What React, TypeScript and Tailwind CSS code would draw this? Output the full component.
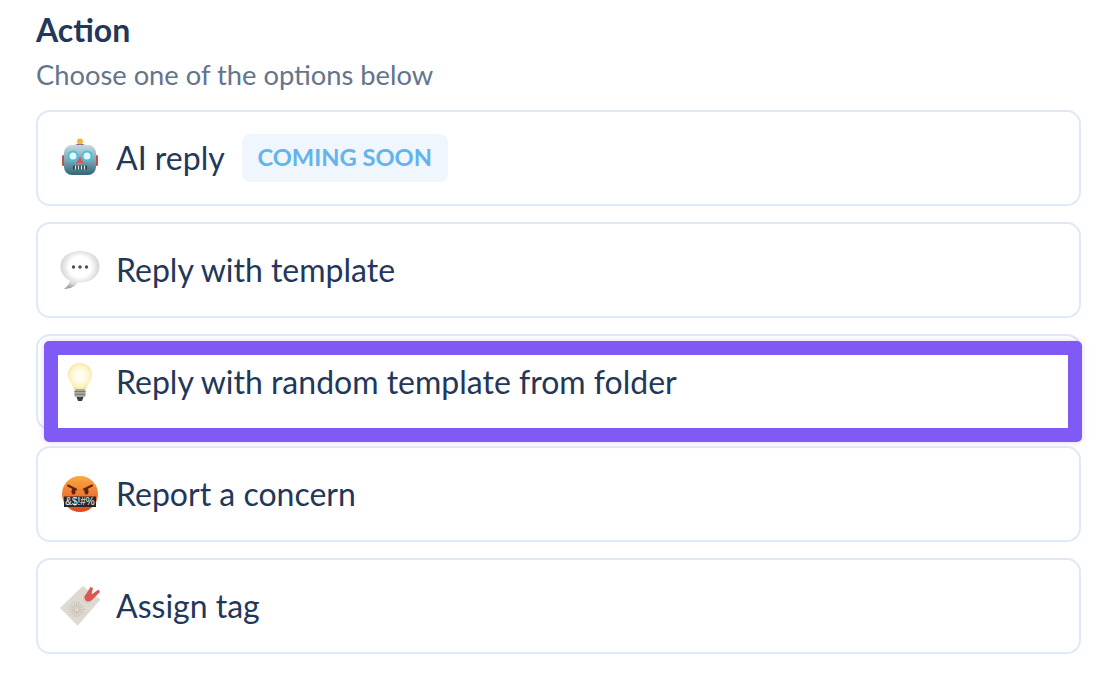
const RobotIcon = () => (
  <svg width="40" height="40" viewBox="0 0 40 40" className="shrink-0">
    <defs>
      <linearGradient id="robotHead" x1="0" y1="0" x2="0" y2="1">
        <stop offset="0" stopColor="#c4d8dd" />
        <stop offset="0.5" stopColor="#7fa9b5" />
        <stop offset="1" stopColor="#2f6577" />
      </linearGradient>
    </defs>
    <rect x="2" y="17" width="4" height="11" rx="1.500" fill="#b9524a" />
    <rect x="34" y="17" width="4" height="11" rx="1.500" fill="#b9524a" />
    <path d="M15 7q5-3 10 0v2H15z" fill="#6d5a9c" />
    <circle cx="20" cy="3.500" r="3" fill="#f3b33d" />
    <rect x="4" y="7" width="32" height="30" rx="8" fill="url(#robotHead)" />
    <circle cx="13" cy="18" r="4.500" fill="#e6f7fb" stroke="#45c1e0" strokeWidth="2" />
    <circle cx="27" cy="18" r="4.500" fill="#e6f7fb" stroke="#45c1e0" strokeWidth="2" />
    <path d="M20 18l3.500 7h-7z" fill="#d9594c" />
    <rect x="13" y="27.500" width="14" height="4" rx="1" fill="#1f3a46" />
    <path d="M15.500 27.500v4M18.500 27.500v4M21.500 27.500v4M24.500 27.500v4" stroke="#dfe8ea" strokeWidth="1.400" />
  </svg>
)

const BubbleIcon = () => (
  <svg width="40" height="40" viewBox="0 0 40 40" className="shrink-0">
    <defs>
      <radialGradient id="bubbleFill" cx="0.5" cy="0.42" r="0.6">
        <stop offset="0.45" stopColor="#ffffff" />
        <stop offset="0.8" stopColor="#d8d8d8" />
        <stop offset="1" stopColor="#a4a4a4" />
      </radialGradient>
    </defs>
    <path
      d="M20 1C8.500 1 .5 7.500.5 16.500c0 6.500 4 11.500 9.500 14-.5 3-2.500 6-6 8.500 5.500 0 10.500-2 14-6.500l2 .1c11.500 0 19.500-7 19.500-16.100S31.500 1 20 1z"
      fill="url(#bubbleFill)"
    />
    <circle cx="13.500" cy="17" r="1.700" fill="#4b4f57" />
    <circle cx="20" cy="17" r="1.700" fill="#4b4f57" />
    <circle cx="26.500" cy="17" r="1.700" fill="#4b4f57" />
  </svg>
)

const BulbIcon = () => (
  <svg width="40" height="40" viewBox="0 0 40 40" className="shrink-0">
    <defs>
      <radialGradient id="bulbGlow" cx="0.5" cy="0.5" r="0.55">
        <stop offset="0.3" stopColor="#fffdf2" />
        <stop offset="0.8" stopColor="#fdf0bd" />
        <stop offset="1" stopColor="#f3d98a" />
      </radialGradient>
    </defs>
    <path
      d="M20 1C13 1 8 6.200 8 12.800c0 6 4.500 9 5.800 14.200h12.400C27.500 21.800 32 18.800 32 12.800 32 6.200 27 1 20 1z"
      fill="url(#bulbGlow)"
    />
    <rect x="14.500" y="27" width="11" height="8" rx="1.500" fill="#a9a9a6" />
    <path d="M14.500 29.500h11M14.500 32.300h11" stroke="#74746f" strokeWidth="0.900" />
    <path d="M16.500 35h7l-1.500 4h-4z" fill="#3f3f3d" />
  </svg>
)

const SwearIcon = () => (
  <svg width="40" height="40" viewBox="0 0 40 40" className="shrink-0">
    <defs>
      <linearGradient id="swearFace" x1="0" y1="0" x2="0" y2="1">
        <stop offset="0" stopColor="#f9ab42" />
        <stop offset="0.55" stopColor="#ef7430" />
        <stop offset="1" stopColor="#de4522" />
      </linearGradient>
    </defs>
    <circle cx="20" cy="20" r="18" fill="url(#swearFace)" />
    <path d="M8 11.500l8 4M32 11.500l-8 4" stroke="#5d2410" strokeWidth="2" strokeLinecap="round" />
    <ellipse cx="13.500" cy="17.500" rx="2" ry="3" fill="#5d2410" />
    <ellipse cx="26.500" cy="17.500" rx="2" ry="3" fill="#5d2410" />
    <rect x="4" y="22.500" width="32" height="10.500" fill="#26262a" />
    <text x="20" y="31.300" textAnchor="middle" fontSize="10" fill="#f4f4f4" fontFamily="'Liberation Sans', sans-serif">
      &amp;$!#%
    </text>
  </svg>
)

const TagIcon = () => (
  <svg width="40" height="40" viewBox="0 0 40 40" className="shrink-0">
    <path d="M22.700 0L40.500 13.300 17.700 39.700 0 22z" fill="#dedad2" />
    <g stroke="#c3bdb0" strokeWidth="0.800">
      <path d="M16.700 15v16.600M8.400 23.300H25M10.800 17.400l11.800 11.800M22.600 17.400L10.800 29.200M13.500 15.700l6.400 15.200M19.900 15.700l-6.400 15.200M9.100 20l15.200 6.600M24.300 20L9.100 26.600" />
    </g>
    <circle cx="16.700" cy="23.300" r="2" fill="#dedad2" />
    <circle cx="27.500" cy="12.500" r="4" fill="#f1efe9" stroke="#bdb8ad" strokeWidth="0.800" />
    <path d="M24.500 10.500L30.500 1l2.500 1-1.500 6.500L38.500 3.500l1.500 2.500-8 8q-2.500 2-5 1.500-3-1.500-2.500-5z" fill="#dc5653" />
  </svg>
)

const rows = [
  { label: 'Reply with template', icon: <BubbleIcon /> },
  { label: 'Reply with random template from folder', icon: <BulbIcon />, highlighted: true },
  { label: 'Report a concern', icon: <SwearIcon /> },
  { label: 'Assign tag', icon: <TagIcon /> },
]

export default function App() {
  return (
    <div
      className="h-[682px] overflow-hidden bg-white pl-[36px] pr-[19px] pt-[9px] text-[#22375a]"
      style={{ fontFamily: "Lato, 'Open Sans', sans-serif" }}
    >
      <h1 className="text-[32px] font-bold leading-[42px] text-[#22375a]">Action</h1>
      <p className="mt-[2px] text-[27.3px] leading-[44px] text-[#64748b]">Choose one of the options below</p>
      <div className="mt-[13px] flex flex-col gap-[16px]">
        <div className="flex h-[96px] items-center gap-[16px] rounded-[14px] border-2 border-[#dfe9f6] pl-[22px]">
          <RobotIcon />
          <span className="text-[32px]">AI reply</span>
          <span className="ml-px flex h-[48px] w-[206px] items-center justify-center rounded-[8px] bg-[#eff6fd] text-[23.7px] font-bold text-[#63b3ed]">
            COMING SOON
          </span>
        </div>
        {rows.map((row) => (
          <div
            key={row.label}
            className="relative flex h-[96px] items-center gap-[16px] rounded-[14px] border-2 border-[#dfe9f6] pl-[22px]"
          >
            {row.icon}
            <span className="text-[32px]">{row.label}</span>
            {row.highlighted && (
              <div className="absolute left-[5.5px] right-[-3px] top-[5px] h-[101px] rounded-[5px] border-[14px] border-[#805af5] shadow-[0_0_6px_rgba(128,90,245,0.25)]" />
            )}
          </div>
        ))}
      </div>
    </div>
  )
}
